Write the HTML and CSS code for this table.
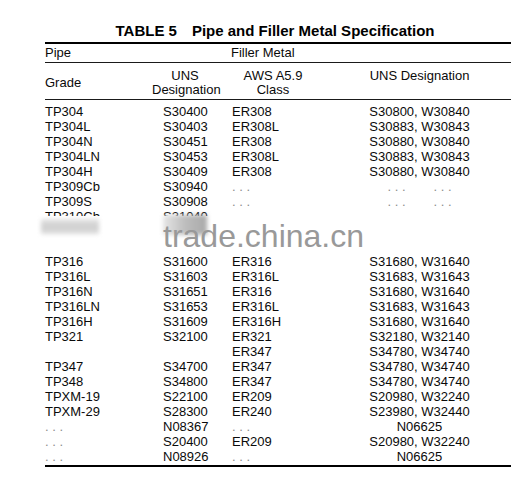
FILE: index.html
```html
<!DOCTYPE html>
<html lang="en">
<head>
<meta charset="utf-8">
<title>Table 5 Pipe and Filler Metal Specification</title>
<link rel="stylesheet" href="styles.css">
</head>
<body>
<div class="sheet">
  <h1 class="title"><span class="tnum">TABLE 5</span><span class="tname">Pipe and Filler Metal Specification</span></h1>
  <table class="spec">
    <colgroup>
      <col class="w-grade"><col class="w-uns"><col class="w-aws"><col class="w-des">
    </colgroup>
    <thead>
      <tr class="group-row">
        <th class="g-pipe">Pipe</th>
        <th class="g-filler" colspan="3">Filler Metal</th>
      </tr>
      <tr class="head-row">
        <th class="h-grade">Grade</th>
        <th class="h-uns">UNS<br>Designation</th>
        <th class="h-aws">AWS A5.9<br>Class</th>
        <th class="h-des">UNS Designation</th>
      </tr>
    </thead>
    <tbody>
      <tr class="first"><td>TP304</td><td class="uns">S30400</td><td class="aws">ER308</td><td class="des">S30800, W30840</td></tr>
      <tr><td>TP304L</td><td class="uns">S30403</td><td class="aws">ER308L</td><td class="des">S30883, W30843</td></tr>
      <tr><td>TP304N</td><td class="uns">S30451</td><td class="aws">ER308</td><td class="des">S30880, W30840</td></tr>
      <tr><td>TP304LN</td><td class="uns">S30453</td><td class="aws">ER308L</td><td class="des">S30883, W30843</td></tr>
      <tr><td>TP304H</td><td class="uns">S30409</td><td class="aws">ER308</td><td class="des">S30880, W30840</td></tr>
      <tr><td>TP309Cb</td><td class="uns">S30940</td><td class="aws"><span class="na">. . .</span></td><td class="des"><span class="na">. . .</span><span class="na na-second">. . .</span></td></tr>
      <tr><td>TP309S</td><td class="uns">S30908</td><td class="aws"><span class="na">. . .</span></td><td class="des"><span class="na">. . .</span><span class="na na-second">. . .</span></td></tr>
      <tr><td>TP310Cb</td><td class="uns">S31040</td><td class="aws"></td><td class="des"></td></tr>
      <tr><td></td><td class="uns"></td><td class="aws"></td><td class="des"></td></tr>
      <tr><td></td><td class="uns"></td><td class="aws"></td><td class="des"></td></tr>
      <tr><td>TP316</td><td class="uns">S31600</td><td class="aws">ER316</td><td class="des">S31680, W31640</td></tr>
      <tr><td>TP316L</td><td class="uns">S31603</td><td class="aws">ER316L</td><td class="des">S31683, W31643</td></tr>
      <tr><td>TP316N</td><td class="uns">S31651</td><td class="aws">ER316</td><td class="des">S31680, W31640</td></tr>
      <tr><td>TP316LN</td><td class="uns">S31653</td><td class="aws">ER316L</td><td class="des">S31683, W31643</td></tr>
      <tr><td>TP316H</td><td class="uns">S31609</td><td class="aws">ER316H</td><td class="des">S31680, W31640</td></tr>
      <tr><td>TP321</td><td class="uns">S32100</td><td class="aws">ER321</td><td class="des">S32180, W32140</td></tr>
      <tr><td></td><td class="uns"></td><td class="aws">ER347</td><td class="des">S34780, W34740</td></tr>
      <tr><td>TP347</td><td class="uns">S34700</td><td class="aws">ER347</td><td class="des">S34780, W34740</td></tr>
      <tr><td>TP348</td><td class="uns">S34800</td><td class="aws">ER347</td><td class="des">S34780, W34740</td></tr>
      <tr><td>TPXM-19</td><td class="uns">S22100</td><td class="aws">ER209</td><td class="des">S20980, W32240</td></tr>
      <tr><td>TPXM-29</td><td class="uns">S28300</td><td class="aws">ER240</td><td class="des">S23980, W32440</td></tr>
      <tr><td><span class="na">. . .</span></td><td class="uns">N08367</td><td class="aws"><span class="na">. . .</span></td><td class="des">N06625</td></tr>
      <tr><td><span class="na">. . .</span></td><td class="uns">S20400</td><td class="aws">ER209</td><td class="des">S20980, W32240</td></tr>
      <tr class="last"><td><span class="na">. . .</span></td><td class="uns">N08926</td><td class="aws"><span class="na">. . .</span></td><td class="des">N06625</td></tr>
    </tbody>
  </table>
  <div class="mask" aria-hidden="true"></div>
  <div class="smudge smudge-a" aria-hidden="true"></div>
  <div class="smudge smudge-b" aria-hidden="true"></div>
  <div class="watermark">trade.china.cn</div>
</div>
</body>
</html>
```

FILE: styles.css
```css
html, body {
  margin: 0;
  padding: 0;
  background: #ffffff;
}

body {
  font-family: "Liberation Sans", Arial, sans-serif;
  color: #0a0a0a;
}

.sheet {
  position: relative;
  width: 466px;
  margin-left: 45px;
  padding-top: 22px;
}

.title {
  margin: 0 0 2px 0;
  padding-right: 6px;
  height: 18px;
  font-size: 15px;
  line-height: 18px;
  font-weight: bold;
  text-align: center;
  color: #000000;
  white-space: nowrap;
}

.tname {
  margin-left: 15px;
}

.spec {
  width: 466px;
  table-layout: fixed;
  border-collapse: collapse;
  border-top: 2px solid #000000;
  border-bottom: 2px solid #000000;
  font-size: 13px;
}

.w-grade { width: 107px; }
.w-uns { width: 66px; }
.w-aws { width: 110px; }
.w-des { width: 183px; }

.spec th,
.spec td {
  padding: 0;
  font-weight: normal;
  white-space: nowrap;
  text-align: left;
}

.group-row th {
  height: 18px;
  line-height: 18px;
  border-bottom: 1px solid #1a1a1a;
}

.spec .group-row .g-filler {
  padding-left: 79px;
}

.head-row th {
  height: 37px;
  line-height: 14px;
  vertical-align: top;
  padding-top: 6px;
  box-sizing: border-box;
  border-bottom: 1px solid #1a1a1a;
}

.spec .head-row .h-grade {
  padding-top: 13px;
}

.spec .head-row .h-uns,
.spec .head-row .h-aws,
.spec .head-row .h-des {
  text-align: center;
}

.spec td {
  height: 15px;
  line-height: 15px;
}

.spec tr.first td {
  padding-top: 4px;
}

.spec tr.last td {
  padding-bottom: 1px;
}

.spec td.uns {
  padding-left: 11px;
}

.spec td.aws {
  padding-left: 14px;
}

.spec td.des {
  text-align: center;
}

.na {
  color: #8c8c8c;
}

.na-second {
  margin-left: 28px;
}

.mask {
  position: absolute;
  left: -10px;
  top: 216px;
  width: 486px;
  height: 37px;
  background: #ffffff;
}

.smudge {
  position: absolute;
  filter: blur(2px);
}

.smudge-a {
  left: -4px;
  top: 219px;
  width: 58px;
  height: 15px;
  background: linear-gradient(180deg, #e4e4e4 0%, #cfcfcf 50%, #dedede 100%);
}

.smudge-b {
  left: 118px;
  top: 215px;
  width: 44px;
  height: 20px;
  background: linear-gradient(90deg, #e6e6e6 0%, #bdbdbd 50%, #a9a9a9 100%);
}

.watermark {
  position: absolute;
  left: 118px;
  top: 220px;
  font-family: "Liberation Sans", Arial, sans-serif;
  font-size: 32px;
  line-height: 32px;
  color: #999999;
  white-space: nowrap;
}
```
